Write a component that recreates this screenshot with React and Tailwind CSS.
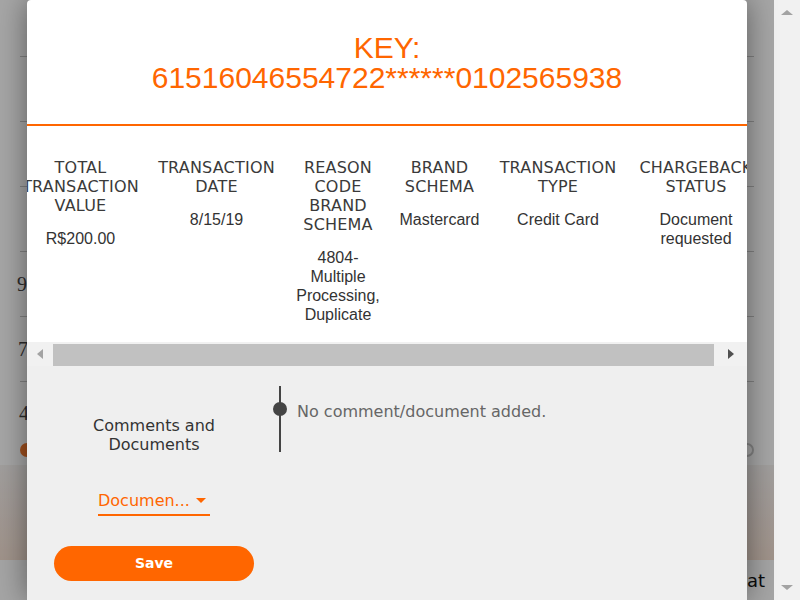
import React from 'react';

const columns = [
    { label: 'TOTAL TRANSACTION VALUE', value: 'R$200.00', width: 'w-[137px]' },
    { label: 'TRANSACTION DATE', value: '8/15/19', width: 'w-[135px]' },
    { label: 'REASON CODE BRAND SCHEMA', value: '4804- Multiple Processing, Duplicate', width: 'w-[108px]' },
    { label: 'BRAND SCHEMA', value: 'Mastercard', width: 'w-[95px]' },
    { label: 'TRANSACTION TYPE', value: 'Credit Card', width: 'w-[142px]' },
    { label: 'CHARGEBACK STATUS', value: 'Document requested', width: 'w-[134px]' },
];

const sans = "font-['DejaVu_Sans',sans-serif]";
const arial = "font-['Liberation_Sans',Arial,sans-serif]";
const serif = "font-['Liberation_Serif',serif]";

function BackgroundPage() {
    // the page behind the modal overlay
    return (
        <div className="flex flex-col h-[600px] bg-white">
            <div className="h-[56px]" />
            <div className="px-[20px]">
                <div className="h-[65px] border-t border-[#c8c8c8]" />
                <div className="h-[65px] border-t border-[#c8c8c8]" />
                <div className="h-[65px] border-t border-[#c8c8c8]" />
                <div className="h-[65px] border-t border-[#c8c8c8] flex items-center pl-[-2px]">
                    <span className={`-ml-[3px] text-[20px] leading-[23px] text-[#444] ${serif}`}>9</span>
                </div>
                <div className="h-[65px] border-t border-[#c8c8c8] flex items-center">
                    <span className={`-ml-[2px] text-[20px] leading-[23px] text-[#444] ${serif}`}>7</span>
                </div>
                <div className="h-[84px] border-t border-[#c8c8c8] flex flex-col">
                    <span className={`mt-[20px] -ml-[1px] text-[20px] leading-[23px] text-[#444] ${serif}`}>4</span>
                    <div className="mt-[18px] flex justify-between items-center h-[14px]">
                        <div className="w-[14px] h-[14px] rounded-full bg-[#f47a2e]" />
                        <div className="w-[14px] h-[14px] rounded-full border-2 border-[#c8c8c8]" />
                    </div>
                </div>
            </div>
            <div className="h-[95px] bg-gradient-to-b from-[#f7f4f2] to-[#f6e2d5]" />
            <div className="flex-1 bg-[#fdfdfd] flex justify-end items-center pr-[9px]">
                <span className={`text-[18px] text-[#111] ${sans}`}>Chat</span>
            </div>
        </div>
    );
}

function TableScroll() {
    return (
        <div className="flex items-center h-[24px] bg-[#f1f1f1]">
            <div className="w-[26px] flex justify-center">
                <div className="w-0 h-0 border-y-[5px] border-y-transparent border-r-[6px] border-r-[#a3a3a3]" />
            </div>
            <div className="flex-1 h-[22px] mt-[1px] bg-[#c1c1c1]" />
            <div className="w-[33px] flex justify-center">
                <div className="w-0 h-0 border-y-[5px] border-y-transparent border-l-[6px] border-l-[#505050]" />
            </div>
        </div>
    );
}

function Modal() {
    return (
        <div className="w-[720px] h-[600px] bg-white rounded-t-[4px] shadow-[0_0_30px_rgba(0,0,0,0.45)] flex flex-col overflow-hidden">
            <div className={`pt-[33px] pb-[31px] text-center text-[#ff6600] text-[30px] leading-[30px] ${arial} border-b-2 border-[#ff6600]`}>
                <div>KEY:</div>
                <div>61516046554722******0102565938</div>
            </div>

            <div className="h-[216px] overflow-hidden">
                <div className="flex -ml-[15px] pt-[32px]">
                    {columns.map(col => (
                        <div key={col.label} className={`${col.width} shrink-0 px-[6px] text-center`}>
                            <div className={`text-[16px] leading-[19px] tracking-[0.2px] text-[#3a3a3a] ${sans}`}>
                                {col.label}
                            </div>
                            <div className={`mt-[14px] text-[16px] leading-[19px] text-[#333] ${arial}`}>
                                {col.value}
                            </div>
                        </div>
                    ))}
                </div>
            </div>

            <TableScroll />

            <div className="flex-1 bg-[#efefef] px-[27px] pt-[20px]">
                <div className="flex">
                    <div className="w-[200px] shrink-0 pt-[30px] text-center">
                        <p className={`text-[16px] leading-[19px] text-[#333] ${sans}`}>Comments and Documents</p>
                    </div>
                    <div className="ml-[25px] flex h-[66px]">
                        <div className="relative w-[2px] bg-[#444]">
                            <div className="absolute left-[-6px] top-[16px] w-[14px] h-[14px] rounded-full bg-[#444]" />
                        </div>
                        <p className={`ml-[16px] mt-[16px] text-[16px] leading-[19px] text-[#666] ${sans}`}>No comment/document added.</p>
                    </div>
                </div>

                <div className="w-[200px] flex justify-center mt-[37px]">
                    <div className="w-[112px] flex items-center justify-between border-b-2 border-[#ff6600] pb-[4px]">
                        <span className={`text-[16px] leading-[19px] text-[#ff6600] ${sans}`}>Documen...</span>
                        <div className="mr-[4px] w-0 h-0 border-x-[5px] border-x-transparent border-t-[5px] border-t-[#ff6600]" />
                    </div>
                </div>

                <button className={`mt-[30px] w-[200px] h-[35px] rounded-full bg-[#ff6600] text-white text-[14px] font-bold ${sans}`}>
                    Save
                </button>
            </div>
        </div>
    );
}

export default function App() {
    return (
        <div className="flex w-[800px] h-[600px] overflow-hidden">
            <div className="relative w-[774px] h-[600px]">
                <BackgroundPage />
                <div className="absolute inset-0 bg-black/35" />
                <div className="absolute top-0 left-[27px]">
                    <Modal />
                </div>
            </div>
            <div className="w-[26px] h-[600px] bg-[#f1f1f1] flex flex-col justify-between items-center py-[10px]">
                <div className="w-0 h-0 border-x-[6px] border-x-transparent border-b-[5px] border-b-[#a3a3a3]" />
                <div className="w-0 h-0 border-x-[6px] border-x-transparent border-t-[5px] border-t-[#a3a3a3]" />
            </div>
        </div>
    );
}
